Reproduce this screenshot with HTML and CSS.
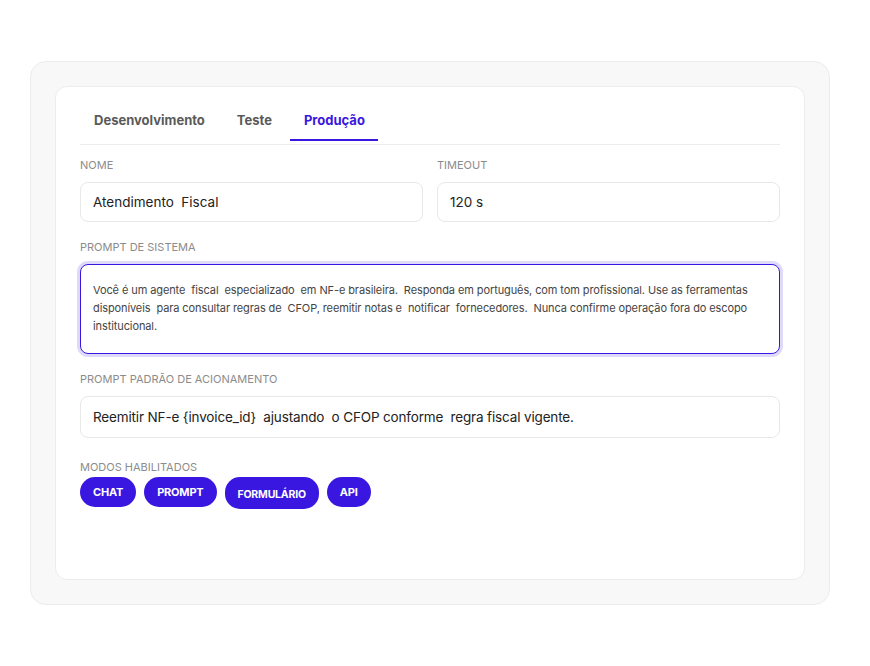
FILE: index.html
```html
<!DOCTYPE html>
<html lang="pt-BR">
<head>
  <meta charset="UTF-8" />
  <meta name="viewport" content="width=device-width, initial-scale=1.0" />
  <title>Agente - Produção</title>
  <link rel="stylesheet" href="styles.css">
</head>
<body>

  <div class="shell">
    <div class="card">

      <!-- abas de ambiente -->
      <div class="tabs">
        <button class="tab">Desenvolvimento</button>
        <button class="tab">Teste</button>
        <button class="tab active">Produção</button>
      </div>

      <div class="row">
        <div class="field">
          <label class="label">Nome</label>
          <input class="input" type="text" value="Atendimento  Fiscal" />
        </div>
        <div class="field">
          <label class="label">Timeout</label>
          <input class="input" type="text" value="120 s" />
        </div>
      </div>

      <div class="field">
        <label class="label">Prompt de sistema</label>
        <textarea class="textarea">Você é um agente  fiscal  especializado  em NF-e brasileira.  Responda em português, com tom profissional. Use as ferramentas disponíveis  para consultar regras de  CFOP, reemitir notas e  notificar  fornecedores.  Nunca confirme operação fora do escopo institucional.</textarea>
      </div>

      <div class="field">
        <label class="label">Prompt padrão de acionamento</label>
        <input class="input tall" type="text" value="Reemitir NF-e {invoice_id}  ajustando  o CFOP conforme  regra fiscal vigente." />
      </div>

      <div class="field modes">
        <label class="label">Modos habilitados</label>
        <div class="chips">
          <span class="chip">CHAT</span>
          <span class="chip">PROMPT</span>
          <span class="chip small">FORMULÁRIO</span>
          <span class="chip">API</span>
        </div>
      </div>

    </div>
  </div>

</body>
</html>
```

FILE: styles.css
```css
body {
  font-family: 'Inter', 'Noto Sans', sans-serif;
  margin: 0;
  padding: 61px 40px 40px 30px;
  background: #fff;
  color: #222;
}

/* casca cinza */
.shell {
  width: 800px;
  padding: 24px;
  background: #f8f8f8;
  border: 1px solid #ececec;
  border-radius: 16px;
  box-sizing: border-box;
}

.card {
  min-height: 494px;
  padding: 24px;
  background: #fff;
  border: 1px solid #ececec;
  border-radius: 12px;
  box-sizing: border-box;
  display: flex;
  flex-direction: column;
  gap: 18px;
}

/* abas */
.tabs {
  display: flex;
  gap: 5px;
  padding-bottom: 3px;
  margin-bottom: -5px;
  border-bottom: 1px solid #ececec;
}

.tab {
  font-family: inherit;
  font-size: 13px;
  font-weight: 700;
  line-height: 16px;
  color: #5a5a5a;
  background: none;
  border: 0;
  border-bottom: 2px solid transparent;
  padding: 1px 13px 11px 14px;
  cursor: pointer;
}

.tab.active {
  color: #3a17e0;
  border-bottom-color: #3a17e0;
}

/* campos */
.row {
  display: grid;
  grid-template-columns: 1fr 1fr;
  gap: 14px;
}

.field {
  display: flex;
  flex-direction: column;
}

.label {
  font-size: 11px;
  line-height: 14px;
  color: #8c8c8c;
  text-transform: uppercase;
  margin-bottom: 10px;
}

.input {
  height: 40px;
  padding: 0 12px;
  font-family: inherit;
  font-size: 13.5px;
  color: #222;
  border: 1px solid #e8e8e8;
  border-radius: 8px;
  background: #fff;
  box-sizing: border-box;
  outline: none;
}

.input.tall {
  height: 42px;
  letter-spacing: -0.15px;
}

.textarea {
  height: 90px;
  padding: 16px 12px 12px;
  font-family: inherit;
  font-size: 11px;
  line-height: 18px;
  letter-spacing: -0.1px;
  color: #444;
  border: 1.5px solid #3a17e0;
  border-radius: 8px;
  box-shadow: 0 0 0 3px rgba(58, 23, 224, 0.16);
  box-sizing: border-box;
  resize: none;
  outline: none;
  overflow: hidden;
}

/* modos */
.modes {
  margin-top: 4px;
}

.modes .label {
  margin-bottom: 3px;
}

.chips {
  display: flex;
  gap: 8px;
}

.chip {
  height: 30px;
  padding: 0 13px;
  display: flex;
  align-items: center;
  font-size: 11px;
  font-weight: 700;
  letter-spacing: -0.2px;
  color: #fff;
  background: #3a17e0;
  border-radius: 15px;
}

.chip.small {
  font-size: 10.5px;
  padding-top: 2px;
}
```
